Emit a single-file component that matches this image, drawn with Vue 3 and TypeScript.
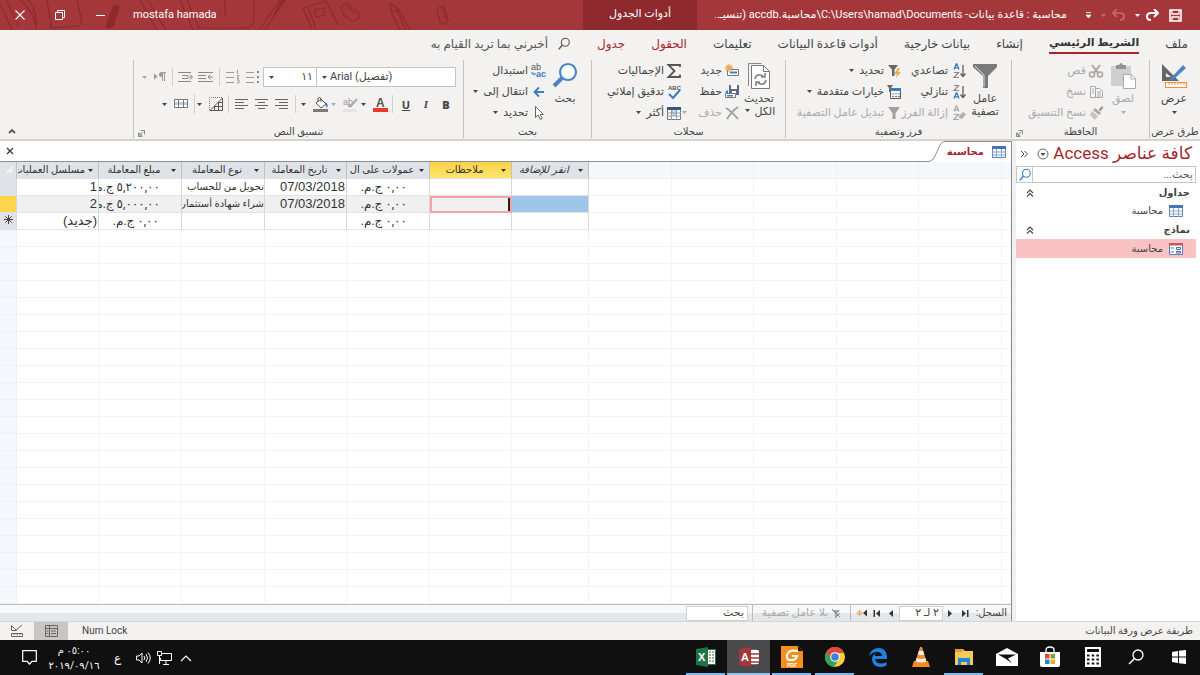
<script setup lang="ts">
import { ref } from 'vue'

interface Command {
  label: string
  icon: string
  caret?: boolean
  disabled?: boolean
  farCaret?: boolean
}
interface Tab {
  label: string
  kind?: 'active' | 'context'
}
interface Row {
  id: string
  amount: string
  type: string
  date: string
  fee: string
}

const tabs: Tab[] = [
  { label: 'ملف' },
  { label: 'الشريط الرئيسي', kind: 'active' },
  { label: 'إنشاء' },
  { label: 'بيانات خارجية' },
  { label: 'أدوات قاعدة البيانات' },
  { label: 'تعليمات' },
  { label: 'الحقول', kind: 'context' },
  { label: 'جدول', kind: 'context' },
]

const clipboard: Command[] = [
  { label: 'قص', icon: 'cut', disabled: true },
  { label: 'نسخ', icon: 'copy', disabled: true },
  { label: 'نسخ التنسيق', icon: 'brush', disabled: true },
]
const sorting: Command[] = [
  { label: 'تصاعدي', icon: 'sort-asc' },
  { label: 'تنازلي', icon: 'sort-desc' },
  { label: 'إزالة الفرز', icon: 'sort-clear', disabled: true },
]
const filtering: Command[] = [
  { label: 'تحديد', icon: 'filter-flash', caret: true },
  { label: 'خيارات متقدمة', icon: 'filter-form', caret: true },
  { label: 'تبديل عامل التصفية', icon: 'filter-small', disabled: true },
]
const records: Command[] = [
  { label: 'جديد', icon: 'rec-new' },
  { label: 'حفظ', icon: 'rec-save' },
  { label: 'حذف', icon: 'rec-delete', disabled: true, farCaret: true },
]
const recordTools: Command[] = [
  { label: 'الإجماليات', icon: 'sigma' },
  { label: 'تدقيق إملائي', icon: 'spelling' },
  { label: 'أكثر', icon: 'grid', caret: true },
]
const finding: Command[] = [
  { label: 'استبدال', icon: 'replace' },
  { label: 'انتقال إلى', icon: 'goto', caret: true },
  { label: 'تحديد', icon: 'pointer', caret: true },
]

const headers = ['مسلسل العمليات', 'مبلغ المعاملة', 'نوع المعاملة', 'تاريخ المعاملة', 'عمولات على ال', 'ملاحظات', 'انقر للإضافة']
const rows: Row[] = [
  { id: '1', amount: '٥,٢٠٠,٠٠ ج.م.', type: 'تحويل من للحساب', date: '07/03/2018', fee: '٠,٠٠ ج.م.' },
  { id: '2', amount: '٥,٠٠٠,٠٠ ج.م.', type: 'شراء شهادة أستثمار', date: '07/03/2018', fee: '٠,٠٠ ج.م.' },
  { id: '(جديد)', amount: '٠,٠٠ ج.م.', type: '', date: '', fee: '٠,٠٠ ج.م.' },
]
const current = ref(1)
const fontName = ref('Arial (تفصيل)')
const fontSize = ref('١١')
const position = ref('٢ لـ ٢')
const recordSearch = ref('بحث')

const apps = [
  { id: 'start', name: 'ابدأ' },
  { id: 'search', name: 'بحث' },
  { id: 'calc', name: 'الحاسبة' },
  { id: 'store', name: 'المتجر' },
  { id: 'mail', name: 'البريد' },
  { id: 'explorer', name: 'مستكشف الملفات', open: true },
  { id: 'vlc', name: 'VLC' },
  { id: 'edge', name: 'Edge' },
  { id: 'chrome', name: 'Chrome', open: true },
  { id: 'foxit', name: 'PDF', open: true },
  { id: 'access', name: 'Access', open: true, active: true },
  { id: 'excel', name: 'Excel', open: true },
]
</script>

<template>
  <svg class="defs" aria-hidden="true">
    <symbol id="caret" viewBox="0 0 5 3"><path d="M0 0h5L2.500 3z" fill="currentColor" /></symbol>
    <symbol id="cut" viewBox="0 0 16 16"><path d="M4 2l6 8M12 2L6 10" stroke="#a6a6a6" stroke-width="2" fill="none" /><g fill="none" stroke="#a6a6a6" stroke-width="1.500"><circle cx="4" cy="11.500" r="2.500" /><circle cx="12" cy="11.500" r="2.500" /></g></symbol>
    <symbol id="copy" viewBox="0 0 16 16"><path d="M2.500 2.500h5v11h-5zM7.500 4.500h4l3 3v6h-7z" fill="#f7f7f7" stroke="#a6a6a6" /><path d="M4 5h2M4 7h2M4 9h2M9 8h4M9 10h4M9 12h4" stroke="#a6a6a6" /></symbol>
    <symbol id="brush" viewBox="0 0 16 16"><path d="M14 1l1.500 1.500-3 4-2-2z" fill="#9b9b9b" /><path d="M7 3l6 5-2 2-6-5z" fill="#a6a6a6" /><path d="M4 6l6 5-3 4-5-5z" fill="#c4c4c4" /></symbol>
    <symbol id="sort-asc" viewBox="0 0 16 16"><path d="M4 6.500L6.200 1h.6L9 6.500M4.700 4.800h3.600" stroke="#3b7cc0" stroke-width="1.300" fill="none" /><path d="M4 9.500h4.500L4 14.500h5" stroke="#8b8b8b" stroke-width="1.200" fill="none" /><path d="M13 2v11M10.500 10.500L13 13.500l2.500-3" stroke="#555" stroke-width="1.200" fill="none" /></symbol>
    <symbol id="sort-desc" viewBox="0 0 16 16"><path d="M4 14.500L6.200 9h.6L9 14.500M4.700 12.800h3.600" stroke="#3b7cc0" stroke-width="1.300" fill="none" /><path d="M4 1.500h4.500L4 6.500h5" stroke="#8b8b8b" stroke-width="1.200" fill="none" /><path d="M13 2v11M10.500 10.500L13 13.500l2.500-3" stroke="#555" stroke-width="1.200" fill="none" /></symbol>
    <symbol id="sort-clear" viewBox="0 0 16 16"><path d="M4 6.500L6.200 1h.6L9 6.500M4.700 4.800h3.600M4 9.500h4.500L4 14.500h5" stroke="#a6a6a6" stroke-width="1.200" fill="none" /><path d="M9 11l4-4 3 2-4 5-3-1z" fill="#b0b0b0" /></symbol>
    <symbol id="filter-flash" viewBox="0 0 16 16"><path d="M2 2h10L8.500 6.500V13H6V6.500z" fill="#666" /><path d="M12 5l-4 6h3l-1 4 5-6h-3l2-4z" fill="#eba85b" /></symbol>
    <symbol id="filter-form" viewBox="0 0 16 16"><path d="M4.500 4.500h10v10h-10z" fill="#fff" stroke="#555" /><path d="M4 4h11v3H4z" fill="#3b7cc0" /><path d="M6 10h2M9 10h2M12 10h2M6 12.500h2M9 12.500h2M12 12.500h2" stroke="#777" /><path d="M1 1h6L5 4v4H3V4z" fill="#666" /></symbol>
    <symbol id="filter-small" viewBox="0 0 16 16"><path d="M2 2h12L9.500 8v6h-3V8z" fill="#a0a0a0" /></symbol>
    <symbol id="filter-off" viewBox="0 0 10 9"><path d="M1 1h8L6 5v4H4V5z" fill="#a6a6a6" /><path d="M1 0l8 8M5 8l4-4" stroke="#8e8e8e" /></symbol>
    <symbol id="rec-new" viewBox="0 0 16 16"><path d="M3.500 6.500h11v6h-11z" fill="#fff" stroke="#777" /><path d="M6 8.500h7v2H6z" fill="#3b7cc0" /><path d="M5 1v8M1 5h8M2.200 2.200l5.600 5.600M7.800 2.200L2.200 7.800" stroke="#eba85b" stroke-width="1.300" /></symbol>
    <symbol id="rec-save" viewBox="0 0 16 16"><path d="M5 1h10v10H5z" fill="#5c6a86" /><path d="M7 1h6v4H7zM8 7h4v4H8z" fill="#fff" /><path d="M1.500 9.500h10v4h-10z" fill="#fff" stroke="#777" /><path d="M3 11h6v1.500H3zM1 8l3-2v4z" fill="#3b7cc0" /></symbol>
    <symbol id="rec-delete" viewBox="0 0 16 16"><path d="M2 3q5 3 12 11M14 2Q8 6 3 14" stroke="#a0a0a0" stroke-width="1.800" fill="none" /></symbol>
    <symbol id="sigma" viewBox="0 0 16 16"><path d="M14 4V2H2.500L8.500 8l-6 6H14v-2.500" stroke="#555" stroke-width="1.800" fill="none" /></symbol>
    <symbol id="spelling" viewBox="0 0 16 16"><text x="2" y="5.500" font-size="6" font-weight="700" fill="#555">ABC</text><path d="M3 10l4 4 7-8" stroke="#3b7cc0" stroke-width="2" fill="none" /></symbol>
    <symbol id="grid" viewBox="0 0 16 16"><path d="M1.500 2.500h13v12h-13z" fill="#fff" stroke="#777" /><path d="M1 2h14v3H1z" fill="#36577f" /><path d="M6 5h4v6H6z" fill="#bcd5ee" /><path d="M1 8h14M1 11h14M5.500 5v10M10.500 5v10" stroke="#999" /></symbol>
    <symbol id="replace" viewBox="0 0 16 16"><text x="1" y="7" font-size="9" fill="#555">ab</text><text x="6" y="14" font-size="9" font-weight="700" fill="#3b7cc0">ac</text><path d="M2 9v2h3M4 9.500L5.500 11 4 12.500" stroke="#3b7cc0" fill="none" /></symbol>
    <symbol id="goto" viewBox="0 0 16 16"><path d="M14 8H5M9 3.500L4.500 8 9 12.500" stroke="#3b7cc0" stroke-width="1.800" fill="none" /></symbol>
    <symbol id="pointer" viewBox="0 0 16 16"><path d="M5.500 1.500v11l2.700-2.500 2 4.500 2-1-2-4h3.300z" fill="#fff" stroke="#666" /></symbol>
    <symbol id="magnifier" viewBox="0 0 16 16"><circle cx="9.500" cy="6" r="4.500" fill="none" stroke="currentColor" stroke-width="1.200" /><path d="M6.300 9.200L2 14" stroke="currentColor" stroke-width="1.500" /></symbol>
    <symbol id="launcher" viewBox="0 0 8 8"><path d="M7.500 5V.500H3M.500 3v4.500H5M6 2L2.500 5.500M2 3v3h3" stroke="#777" fill="none" /></symbol>
    <symbol id="table-small" viewBox="0 0 14 12"><path d="M.500.500h13v11H.500z" fill="#fff" stroke="#5c7fb0" /><path d="M0 0h14v3H0z" fill="#4573b8" /><path d="M0 6h14M0 9h14M4.500 3v9M9.500 3v9" stroke="#86a3cb" /></symbol>
    <symbol id="form-small" viewBox="0 0 14 12"><path d="M.500.500h13v11H.500z" fill="#fff" stroke="#5c7fb0" /><path d="M0 0h14v2.500H0z" fill="#c55a5e" /><path d="M1.500 5H5M1.500 9H5" stroke="#4573b8" /><path d="M7.500 4.500h4v2h-4zM7.500 8.500h4v1.500h-4z" fill="#dbe7f6" stroke="#4573b8" /></symbol>
    <symbol id="chevrons-up" viewBox="0 0 8 8"><path d="M1 4l3-3 3 3M1 7.500l3-3 3 3" fill="none" stroke="#444" stroke-width="1.100" /></symbol>
    <symbol id="align-right" viewBox="0 0 14 12"><path d="M0 1.500h13M4 4.500h9M0 7.500h13M4 10.500h9" stroke="#666" /></symbol>
    <symbol id="align-center" viewBox="0 0 14 12"><path d="M0 1.500h13M3 4.500h7M0 7.500h13M3 10.500h7" stroke="#666" /></symbol>
    <symbol id="align-left" viewBox="0 0 14 12"><path d="M0 1.500h13M0 4.500h9M0 7.500h13M0 10.500h9" stroke="#666" /></symbol>

    <symbol id="app-start" viewBox="0 0 22 22"><path d="M4 6l6-1v5.500H4zM11 4.800L18 4v6.500h-7zM4 11.500h6V17l-6-1zM11 11.500h7V18l-7-.800z" fill="#fff" /></symbol>
    <symbol id="app-search" viewBox="0 0 22 22"><circle cx="13" cy="9" r="5" fill="none" stroke="#fff" stroke-width="1.300" /><path d="M9.300 12.700L4 18" stroke="#fff" stroke-width="1.500" /></symbol>
    <symbol id="app-calc" viewBox="0 0 22 22"><path d="M3 1h16v20H3z" fill="#fff" /><path d="M5 3h12v3H5z" fill="#111" /><path d="M5 9.500h12M5 13.500h12M5 17.500h12" stroke="#111" stroke-width="2" stroke-dasharray="2.500 2.200" /></symbol>
    <symbol id="app-store" viewBox="0 0 22 22"><path d="M7 7V4q0-3 4-3t4 3v3" fill="none" stroke="#fff" stroke-width="1.300" /><path d="M1 6h20v13q0 2-2 2H3q-2 0-2-2z" fill="#fff" /><path d="M6 8h4.500v4.500H6z" fill="#e8452c" /><path d="M11.500 8H16v4.500h-4.500z" fill="#7aa82c" /><path d="M6 13.500h4.500V18H6z" fill="#1b83d8" /><path d="M11.500 13.500H16V18h-4.500z" fill="#f3a821" /></symbol>
    <symbol id="app-mail" viewBox="0 0 22 22"><path d="M0 8l11-6 11 6v12H0z" fill="#fff" /><path d="M2 8.500h18l-8 4 4 5-6-4.500z" fill="#111" /></symbol>
    <symbol id="app-explorer" viewBox="0 0 22 22"><path d="M2 3h8l2 2h8v14H2z" fill="#f7ca55" /><path d="M2 3h8v3H2z" fill="#f09a2b" /><path d="M5 12h12v7h-3v-3H8v3H5z" fill="#2385d7" /></symbol>
    <symbol id="app-vlc" viewBox="0 0 22 22"><path d="M4 15h14l2 6H2z" fill="#f38b1e" /><path d="M10 1h2l5 16q-6 3-12 0z" fill="#f38b1e" /><path d="M8.800 5h4.400l1.100 3.500q-3.300 1.500-6.600 0zM6.600 12q4.400 2 8.800 0l1 3.500q-5.400 2-10.800 0z" fill="#eee" /></symbol>
    <symbol id="app-edge" viewBox="0 0 22 22"><path d="M2 10Q4 2 12 2q7 0 8 8.500V13H8q1 4.500 6 4.500 3 0 5.500-1.500v3.500Q17 21 13 21q-8-1-8-8 0-4 4-6-1 1-1.500 3H15q0-4-5-4-5 0-8 4z" fill="#1d83df" /></symbol>
    <symbol id="app-chrome" viewBox="0 0 22 22"><circle cx="11" cy="11" r="10" fill="#f9cf3c" /><path d="M11 11L2.300 6A10 10 0 0 0 10 21l5-8z" fill="#34a35a" /><path d="M11 7h9.200A10 10 0 0 0 2.300 6L7 13z" fill="#df4a3c" /><circle cx="11" cy="11" r="4.800" fill="#fff" /><circle cx="11" cy="11" r="3.800" fill="#3d80e0" /></symbol>
    <symbol id="app-foxit" viewBox="0 0 22 22"><path d="M0 0h17l5 5v17H0z" fill="#f68e1e" /><path d="M17 0v5h5z" fill="#111" /><path d="M17 5q-9-2-11 4-1 6 5 5 4 0 5-4h-5" fill="none" stroke="#fff" stroke-width="2.200" /><text x="6" y="20.500" font-size="5" font-weight="700" fill="#fff">PDF</text></symbol>
    <symbol id="app-access" viewBox="0 0 22 22"><path d="M12 4q8-1 9 1v12q-1 2-9 1z" fill="#fff" /><path d="M13 8h8M13 12h8M13 16h8" stroke="#a4373a" stroke-width="1.300" /><path d="M1 3l12-2v20L1 19z" fill="#a4373a" /><text x="3" y="15" font-size="11" font-weight="700" fill="#fff">A</text></symbol>
    <symbol id="app-excel" viewBox="0 0 22 22"><path d="M12.500 3.500h8v15h-8z" fill="#fff" stroke="#1f7346" /><path d="M14 6h2M14 9h2M14 12h2M14 15h2M17 6h2M17 9h2M17 12h2M17 15h2" stroke="#555" /><path d="M1 3l12-2v20L1 19z" fill="#1f7346" /><text x="3" y="15" font-size="11" font-weight="700" fill="#fff">X</text></symbol>
  </svg>

  <div class="window" dir="rtl">
    <header class="titlebar">
      <svg class="doodles" viewBox="0 0 470 30" aria-hidden="true">
        <g fill="none" stroke="#8d2a2e" stroke-width="1.200">
          <path d="M0 4l12 26M6 0l13 27M20 0q15 12 16 30M28 0q10 14 8 24M47 0l5 28 26-2q5-2 3-8L77 0M52 28l-3-4M140 0l17 30M148 0l18 30M180 0l13 30M187 0l12 28M196 28h50q7-1 8-8V0M225 0v15" />
          <path d="M260 29l20-29M265 29l20-29M303 8l23-7 12 24M303 8l9 21M308 7l8 22M315 10l9-2 1 7-9 2zM341 8q1-6 7-4l10 8q3 9-6 9l-8-6zM346 6l9 7" />
          <path d="M390 3l8 6 12 21M390 3l2 11 8 16M392 12l6-3M396 9l10 21M438 8l6-2 4 14q-4 7-8 2l-3-12q4-6 6 0l3 9" />
        </g>
        <path d="M112 8q3-6 8-2l-6 20q-6 5-9 1zM281 0h5l-13 16z" fill="#8d2a2e" />
      </svg>
      <div class="quick">
        <button aria-label="حفظ"><svg width="13" height="13" viewBox="0 0 13 13"><path d="M1 1h11v11H1z" fill="none" stroke="#fff" stroke-width="1.600" /><path d="M3 1v4h7V1M3 12V8h7v4" fill="none" stroke="#fff" stroke-width="1.300" /></svg></button>
        <button class="redo" aria-label="إعادة"><svg width="13" height="12" viewBox="0 0 13 12"><path d="M12 4H5Q1 4 1 7.500 1 11 5 11M8 0l4 4-4 4" fill="none" stroke="#fff" stroke-width="2" /></svg><svg class="caret"><use href="#caret" /></svg></button>
        <button class="undo" aria-label="تراجع" disabled><svg width="13" height="12" viewBox="0 0 13 12"><path d="M1 4h7q4 0 4 3.500Q12 11 8 11M5 0L1 4l4 4" fill="none" stroke="#c96c6f" stroke-width="1.600" /></svg><svg class="caret"><use href="#caret" /></svg></button>
        <button aria-label="تخصيص"><svg width="5" height="7" viewBox="0 0 5 7"><path d="M0 .500h5M0 3h5L2.500 6z" stroke="#fff" fill="#fff" stroke-width=".800" /></svg></button>
      </div>
      <h1>محاسبة : قاعدة بيانات- C:\Users\hamad\Documents\محاسبة.accdb (تنسيـ...</h1>
      <div class="context-title">أدوات الجدول</div>
      <span class="user">mostafa hamada</span>
      <div class="winbtns">
        <button aria-label="تصغير"><svg width="11" height="11" viewBox="0 0 11 11"><path d="M1 5.500h9" stroke="#fff" /></svg></button>
        <button aria-label="استعادة"><svg width="10" height="10" viewBox="0 0 10 10"><path d="M.500 2.500h7v7h-7zM2.500 2.500v-2h7v7h-2" fill="none" stroke="#fff" /></svg></button>
        <button aria-label="إغلاق"><svg width="10" height="10" viewBox="0 0 10 10"><path d="M.500.500l9 9M9.500.500l-9 9" stroke="#fff" stroke-width="1.100" /></svg></button>
      </div>
    </header>

    <nav class="tabs">
      <button v-for="t in tabs" :key="t.label" class="tab" :class="t.kind">{{ t.label }}</button>
      <button class="tab tell"><svg width="14" height="14"><use href="#magnifier" /></svg>أخبرني بما تريد القيام به</button>
    </nav>

    <section class="ribbon">
      <div class="group views">
        <div class="tools">
          <button class="big">
            <svg width="28" height="28" viewBox="0 0 28 28"><path d="M2 2v17h17zM6 11v4h5z" fill="#666" fill-rule="evenodd" /><path d="M11 16L23 3l3 3-13 12-4 1z" fill="#4a86c5" /><path d="M5.500 20.500h21v5h-21z" fill="#fff" stroke="#eb9140" stroke-width="1.200" /><path d="M9 21v2M12 21v2M15 21v2M18 21v2M21 21v2M24 21v2" stroke="#eb9140" /></svg>
            <span>عرض</span><svg class="caret"><use href="#caret" /></svg>
          </button>
        </div>
        <h2>طرق عرض</h2>
      </div>

      <div class="group clip">
        <div class="tools">
          <button class="big" disabled>
            <svg width="28" height="28" viewBox="0 0 28 28"><path d="M2 4h20v20H2z" fill="#cfcfcf" /><path d="M7 3h3q2-4 4 0h3v4H7z" fill="#929292" /><path d="M14.500 12.500h8l4 4v10h-12z" fill="#fff" stroke="#aaa" /><path d="M22 12v5h5" fill="none" stroke="#aaa" /></svg>
            <span>لصق</span><svg class="caret"><use href="#caret" /></svg>
          </button>
          <div class="col">
            <button v-for="c in clipboard" :key="c.label" class="cmd" :disabled="c.disabled"><svg class="ic"><use :href="'#' + c.icon" /></svg>{{ c.label }}</button>
          </div>
        </div>
        <h2>الحافظة</h2>
        <button class="launch" aria-label="خيارات الحافظة"><svg width="7" height="7"><use href="#launcher" /></svg></button>
      </div>

      <div class="group sort">
        <div class="tools">
          <button class="big">
            <svg width="28" height="28" viewBox="0 0 28 28"><path d="M2 2h24v3l-9 9v12h-5V14L2 5z" fill="#7a7a7a" /><path d="M4 4l9 9v12" fill="none" stroke="#ddd" /></svg>
            <span>عامل<br>تصفية</span>
          </button>
          <div class="col asc">
            <button v-for="c in sorting" :key="c.label" class="cmd" :disabled="c.disabled"><svg class="ic"><use :href="'#' + c.icon" /></svg>{{ c.label }}</button>
          </div>
          <div class="col">
            <button v-for="c in filtering" :key="c.label" class="cmd" :disabled="c.disabled"><svg class="ic"><use :href="'#' + c.icon" /></svg>{{ c.label }}<svg v-if="c.caret" class="caret"><use href="#caret" /></svg></button>
          </div>
        </div>
        <h2>فرز وتصفية</h2>
      </div>

      <div class="group recs">
        <div class="tools">
          <button class="big">
            <svg width="28" height="28" viewBox="0 0 28 28"><path d="M3.500 24V1.500h13" fill="none" stroke="#888" /><path d="M6.500 3.500h12l6 6v17h-18z" fill="#fff" stroke="#777" /><path d="M18.500 3.500v6h6" fill="none" stroke="#777" /><path d="M10 17q1-5 6-4l3 2M20 11v4h-4M21 18q-1 5-6 4l-3-2M11 24v-4h4" fill="none" stroke="#888" stroke-width="1.700" /></svg>
            <span>تحديث<br>الكل <svg class="caret"><use href="#caret" /></svg></span>
          </button>
          <div class="col rec">
            <button v-for="c in records" :key="c.label" class="cmd" :disabled="c.disabled"><svg class="ic"><use :href="'#' + c.icon" /></svg>{{ c.label }}<svg v-if="c.farCaret" class="caret far"><use href="#caret" /></svg></button>
          </div>
          <div class="col">
            <button v-for="c in recordTools" :key="c.label" class="cmd"><svg class="ic"><use :href="'#' + c.icon" /></svg>{{ c.label }}<svg v-if="c.caret" class="caret"><use href="#caret" /></svg></button>
          </div>
        </div>
        <h2>سجلات</h2>
      </div>

      <div class="group find">
        <div class="tools">
          <button class="big">
            <svg width="28" height="28" viewBox="0 0 28 28"><circle cx="17" cy="10" r="8" fill="#fff" stroke="#4a86c5" stroke-width="2.200" /><path d="M11 16l-8 8" stroke="#4a86c5" stroke-width="4" /></svg>
            <span>بحث</span>
          </button>
          <div class="col">
            <button v-for="c in finding" :key="c.label" class="cmd"><svg class="ic"><use :href="'#' + c.icon" /></svg>{{ c.label }}<svg v-if="c.caret" class="caret"><use href="#caret" /></svg></button>
          </div>
        </div>
        <h2>بحث</h2>
      </div>

      <div class="group text">
        <div class="format">
          <div class="line">
            <span class="pick name"><select v-model="fontName" aria-label="الخط" dir="ltr"><option>Arial (تفصيل)</option></select><svg class="caret"><use href="#caret" /></svg></span>
            <span class="pick size"><select v-model="fontSize" aria-label="حجم الخط"><option>١١</option></select><svg class="caret"><use href="#caret" /></svg></span>
            <button class="tool" disabled aria-label="تعداد نقطي"><svg width="14" height="14" viewBox="0 0 14 14"><path d="M0 2.500h8M0 7.500h8M0 12.500h8" stroke="#999" /><path d="M11 1h2v2h-2zM11 6h2v2h-2zM11 11h2v2h-2z" fill="#888" /></svg></button>
            <button class="tool" disabled aria-label="تعداد رقمي"><svg width="14" height="14" viewBox="0 0 14 14"><path d="M0 2.500h8M0 7.500h8M0 12.500h8" stroke="#999" /><path d="M11.500 0v4M11 5.500h2l-2 3h2M11 10h2v3h-2" stroke="#999" fill="none" /></svg></button>
            <i class="sep" />
            <button class="tool" disabled aria-label="إنقاص"><svg width="16" height="12" viewBox="0 0 16 12"><path d="M0 1.500h15M0 4.500h8M0 7.500h8M0 10.500h15M15 6h-5M12.500 3.500L10 6l2.500 2.500" stroke="#888" fill="none" /></svg></button>
            <button class="tool" disabled aria-label="زيادة"><svg width="16" height="12" viewBox="0 0 16 12"><path d="M0 1.500h13M4 4.500h6M4 7.500h6M0 10.500h13M9 6h5M12 3.500L14.500 6 12 8.500" stroke="#888" fill="none" /></svg></button>
            <i class="sep" />
            <button class="tool wide" disabled aria-label="اتجاه النص"><svg width="12" height="10" viewBox="0 0 12 10"><path d="M0 1.500L3.500 4.500 0 7.500zM8 0h4v1h-1v8h-1V1H9v8H8V5Q5 5 5 2.500T8 0z" fill="#999" /></svg><svg class="caret"><use href="#caret" /></svg></button>
          </div>
          <div class="line">
            <button class="tool letter" aria-label="غامق"><b>B</b></button>
            <button class="tool letter" aria-label="مائل"><em>I</em></button>
            <button class="tool letter" aria-label="تسطير"><u>U</u></button>
            <i class="sep" />
            <button class="tool wide" aria-label="لون الخط"><svg width="15" height="15" viewBox="0 0 15 15"><text x="3" y="10" font-size="12" font-weight="700" fill="#555">A</text><path d="M0 11h15v4H0z" fill="#e8392b" /></svg><svg class="caret"><use href="#caret" /></svg></button>
            <button class="tool wide" disabled aria-label="تمييز"><svg width="15" height="15" viewBox="0 0 15 15"><text x="0" y="8" font-size="9" fill="#999">ab</text><path d="M14 2l-7 8M5 8l2 2" stroke="#aaa" stroke-width="2" /><path d="M0 12h14v3H0z" fill="#e3e3e3" /></svg><svg class="caret"><use href="#caret" /></svg></button>
            <button class="tool wide" aria-label="لون الخلفية"><svg width="15" height="15" viewBox="0 0 15 15"><path d="M3 6l5-4 5 5-5 4zM5 5V1q2-2 3 1v3" fill="#fff" stroke="#555" /><path d="M12 5q4 2 2 6l-2-4z" fill="#3b7cc0" /><path d="M0 12h15v3H0z" fill="#7a7a7a" /></svg><svg class="caret"><use href="#caret" /></svg></button>
            <i class="sep" />
            <button class="tool" aria-label="يمين"><svg width="14" height="12"><use href="#align-right" /></svg></button>
            <button class="tool" aria-label="وسط"><svg width="14" height="12"><use href="#align-center" /></svg></button>
            <button class="tool" aria-label="يسار"><svg width="14" height="12"><use href="#align-left" /></svg></button>
            <i class="sep" />
            <button class="tool wide" aria-label="خطوط الشبكة"><svg width="14" height="14" viewBox="0 0 14 14"><path d="M.500 13V.500H13" fill="none" stroke="#777" stroke-dasharray="1 1" /><path d="M1 13.500L13.500 1v12.500zM5 9.500h8M9 5.500h4M5.500 9v4M9.500 5v8" fill="none" stroke="#555" /></svg><svg class="caret"><use href="#caret" /></svg></button>
            <button class="tool wide banding" aria-label="لون الصف البديل"><svg width="14" height="12" viewBox="0 0 14 12"><path d="M.500 1.500h13v8H.500z" fill="#fff" stroke="#777" /><path d="M1 4h12v3H1z" fill="#b8cde6" /><path d="M0 1.500h14M4.500 1v8M9.500 1v8" stroke="#777" /></svg><svg class="caret"><use href="#caret" /></svg></button>
          </div>
        </div>
        <h2>تنسيق النص</h2>
        <button class="launch" aria-label="خيارات النص"><svg width="7" height="7"><use href="#launcher" /></svg></button>
      </div>
      <div class="rest"><button aria-label="طي الشريط"><svg width="8" height="6" viewBox="0 0 8 6"><path d="M1 5l3-3 3 3" fill="none" stroke="#555" stroke-width="1.800" /></svg></button></div>
    </section>

    <main class="work">
      <aside class="pane">
        <div class="pane-head">
          <h2>كافة عناصر Access</h2>
          <button aria-label="القائمة"><svg width="12" height="12" viewBox="0 0 12 12"><circle cx="6" cy="6" r="5" fill="none" stroke="#666" /><path d="M3.500 5h5L6 8z" fill="#444" /></svg></button>
          <button class="shut" aria-label="إخفاء"><svg width="8" height="8" viewBox="0 0 8 8"><path d="M1 1l3 3-3 3M4.500 1l3 3-3 3" fill="none" stroke="#444" /></svg></button>
        </div>
        <div class="find-box">
          <input type="text" aria-label="بحث في الكائنات" placeholder="بحث...">
          <button aria-label="بحث"><svg width="14" height="14"><use href="#magnifier" /></svg></button>
        </div>
        <button class="cat">جداول<svg width="8" height="8"><use href="#chevrons-up" /></svg></button>
        <a class="obj" href="#"><svg width="14" height="12"><use href="#table-small" /></svg>محاسبة</a>
        <button class="cat">نماذج<svg width="8" height="8"><use href="#chevrons-up" /></svg></button>
        <a class="obj chosen" href="#"><svg width="14" height="12"><use href="#form-small" /></svg>محاسبة</a>
      </aside>

      <section class="doc">
        <div class="doc-tabs">
          <button class="doc-tab"><svg width="14" height="12"><use href="#table-small" /></svg>محاسبة</button>
          <svg width="16" height="21" viewBox="0 0 16 21"><path d="M0 20.500Q4 20 6 15L11 4q2-3.500 5-3.500" fill="none" stroke="#8e8e8e" /></svg>
          <div class="doc-line"><button aria-label="إغلاق الجدول"><svg width="8" height="8" viewBox="0 0 8 8"><path d="M1 1l6 6M7 1L1 7" stroke="#333" stroke-width="1.200" /></svg></button></div>
        </div>

        <table class="sheet" dir="ltr">
          <colgroup>
            <col class="c-mark"><col class="c-a"><col class="c-b"><col class="c-b"><col class="c-a"><col class="c-b"><col class="c-a"><col class="c-add"><col class="c-b"><col class="c-a"><col class="c-b"><col class="c-a"><col class="c-b"><col>
          </colgroup>
          <thead>
            <tr>
              <th class="corner"><svg width="9" height="9" viewBox="0 0 9 9"><path d="M0 9L9 0v9z" fill="#edf2f7" stroke="#cbd3dc" stroke-width=".500" /></svg></th>
              <th v-for="(h, i) in headers" :key="h" :class="{ hot: i === 5, add: i === 6 }"><div dir="rtl"><svg class="caret"><use href="#caret" /></svg><span>{{ h }}</span></div></th>
              <th v-for="n in 6" :key="n" class="void" />
            </tr>
          </thead>
          <tbody>
            <tr v-for="(r, i) in rows" :key="r.id" :class="{ current: i === current }">
              <th class="mark"><svg v-if="i === 2" width="9" height="9" viewBox="0 0 9 9"><path d="M4.500 0v9M0 4.500h9M1.300 1.300l6.400 6.400M7.700 1.300L1.300 7.700" stroke="#444" /></svg></th>
              <td dir="rtl" class="id">{{ r.id }}</td>
              <td dir="rtl" class="money">{{ r.amount }}</td>
              <td dir="rtl" class="kind">{{ r.type }}</td>
              <td dir="ltr" class="date">{{ r.date }}</td>
              <td dir="rtl" class="money">{{ r.fee }}</td>
              <td :class="{ editing: i === current }"><input v-if="i === current" type="text" aria-label="ملاحظات"></td>
              <td :class="{ next: i === current }" />
              <td v-for="n in 6" :key="n" class="void" />
            </tr>
            <tr v-for="n in 22" :key="'e' + n" class="empty"><th /><td v-for="k in 13" :key="k" /></tr>
          </tbody>
        </table>

        <div class="recordbar">
          <label for="pos">السجل:</label>
          <button aria-label="الأخير"><svg width="7" height="7" viewBox="0 0 7 7"><path d="M0 0l4 3.500L0 7zM5 0h1.500v7H5z" fill="#333" /></svg></button>
          <button aria-label="التالي"><svg width="7" height="7" viewBox="0 0 7 7"><path d="M1 0l4 3.500L1 7z" fill="#333" /></svg></button>
          <input id="pos" v-model="position" type="text" class="pos">
          <button aria-label="السابق"><svg width="7" height="7" viewBox="0 0 7 7"><path d="M5 0v7L1 3.500z" fill="#333" /></svg></button>
          <button aria-label="الأول"><svg width="7" height="7" viewBox="0 0 7 7"><path d="M7 0v7L3 3.500zM.500 0H2v7H.500z" fill="#333" /></svg></button>
          <button aria-label="سجل جديد"><svg width="12" height="8" viewBox="0 0 12 8"><path d="M11 .500v7L7 4z" fill="#333" /><path d="M3.500 1v6M.500 4h6M1.500 2l4 4M5.500 2l-4 4" stroke="#eba85b" /></svg></button>
          <button class="nofilter" disabled><svg width="10" height="9"><use href="#filter-off" /></svg>بلا عامل تصفية</button>
          <input v-model="recordSearch" type="text" class="lookup" aria-label="بحث في السجلات">
          <div class="scroll" />
        </div>
      </section>
    </main>

    <footer class="status">
      <span>طريقة عرض ورقة البيانات</span>
      <span class="num">Num Lock</span>
      <button class="on" aria-label="ورقة البيانات"><svg width="13" height="12" viewBox="0 0 13 12"><path d="M.500.500h12v11H.500zM0 3.500h13M4.500 0v12M6 6h5M6 8.500h5M1.500 6h2M1.500 8.500h2" fill="none" stroke="#666" /></svg></button>
      <button aria-label="التصميم"><svg width="14" height="12" viewBox="0 0 14 12"><path d="M1.500.500v5h5zM5 6l7-6M1.500 8.500h11v3h-11zM4 9v1M7 9v1M10 9v1" fill="none" stroke="#666" /></svg></button>
    </footer>

    <div class="taskbar">
      <button v-for="a in apps" :key="a.id" class="app" :class="{ open: a.open, active: a.active }" :aria-label="a.name"><svg width="22" height="22"><use :href="'#app-' + a.id" /></svg></button>
      <div class="tray">
        <button aria-label="رموز مخفية"><svg width="12" height="8" viewBox="0 0 12 8"><path d="M1 7l5-5 5 5" fill="none" stroke="#fff" stroke-width="1.200" /></svg></button>
        <button aria-label="الشبكة"><svg width="15" height="14" viewBox="0 0 15 14"><path d="M4 2.500h10.500v7H3.500V7M9 10v3M6 13.500h6M.500.500h4v4h-4zM2.500 5v8" fill="none" stroke="#fff" /></svg></button>
        <button aria-label="الصوت"><svg width="15" height="14" viewBox="0 0 15 14"><path d="M.500 5h2.500l3-3v10l-3-3H.500zM8 5q1.500 2 0 4M10 3q3 4 0 8M12 1.500q4.500 5.500 0 11" fill="none" stroke="#fff" /></svg></button>
        <button class="lang">ع</button>
        <div class="clock"><span>٠٥:٠٠ م</span><span>٢٠١٩/٠٩/١٦</span></div>
        <button class="notes" aria-label="الإشعارات"><svg width="15" height="15" viewBox="0 0 15 15"><path d="M.700.700h13.600v10.600H10L7.500 14 5 11.300H.700z" fill="none" stroke="#fff" stroke-width="1.200" /></svg></button>
      </div>
    </div>
  </div>
</template>

<style>
html, body { margin: 0; background: #fff; }
</style>

<style scoped>
* { box-sizing: border-box; }
.defs { position: absolute; width: 0; height: 0; overflow: hidden; }
svg text { direction: ltr; font-family: "Liberation Sans", sans-serif; }
.window {
  display: flex; flex-direction: column; min-height: 100vh;
  font-family: Roboto, "DejaVu Sans", sans-serif;
  font-size: 11px; color: #444; line-height: 16px; overflow: hidden;
}
button, input, select { font: inherit; color: inherit; border: 0; background: none; padding: 0; margin: 0; border-radius: 0; outline: 0; }
button { display: flex; align-items: center; white-space: nowrap; }
button:disabled { color: #aaa; }
svg { flex: none; }
h1, h2 { margin: 0; font-weight: 400; font-size: 11px; white-space: nowrap; }
.caret { width: 5px; height: 3px; }

.titlebar { position: relative; display: flex; align-items: center; height: 30px; background: #a4373a; color: #fff; padding-right: 18px; }
.doodles { position: absolute; left: 0; top: 0; width: 470px; height: 30px; }
.quick { display: flex; flex: none; align-items: center; gap: 10px; width: 97px; }
.quick button { gap: 6px; }
.quick .undo { color: #c96c6f; }
.titlebar h1 { flex: 1; padding-right: 18px; overflow: hidden; line-height: 20px; }
.context-title { flex: none; width: 114px; height: 30px; margin-right: 18px; background: #8e2a2e; line-height: 28px; text-align: center; }
.user { position: relative; flex: none; width: 463px; text-align: left; padding-left: 13px; direction: ltr; }
.winbtns { position: relative; display: flex; flex: none; }
.winbtns button { width: 40px; height: 30px; justify-content: center; }

.tabs { display: flex; align-items: flex-start; gap: 26px; height: 27px; padding: 4px 12px 0 0; background: #f3f2f1; }
.tab { height: 20px; font-size: 12px; }
.active { font-size: 11px; font-weight: 700; color: #333; border-bottom: 2px solid #a4262c; }
.context { color: #a4262c; }
.tell { gap: 9px; color: #555; }

.ribbon { display: flex; height: 84px; background: #f3f2f1; border-bottom: 2px solid #d4d2d0; }
.group { position: relative; display: flex; flex-direction: column; justify-content: space-between; border-left: 1px solid #c4c2c0; margin: 3px 0 1px; flex: none; }
.group h2 { text-align: center; font-size: 10px; line-height: 12px; }
.views { width: 51px; }
.clip { width: 138px; }
.sort { width: 226px; }
.recs { width: 194px; }
.find { width: 128px; }
.text { width: 330px; }
.rest { flex: 1; display: flex; align-items: flex-end; justify-content: flex-end; padding: 0 0 5px 8px; }
.tools { display: flex; padding-right: 7px; }
.big { flex-direction: column; width: 38px; padding-top: 2px; line-height: 13px; }
.big span { margin-top: 2px; }
.big > .caret { margin-top: 6px; }
.big span .caret { margin: 3px 2px; }
.col { display: flex; flex-direction: column; }
.cmd { height: 21px; gap: 2px; }
.cmd .caret { margin-right: 3px; }
.cmd .far { margin-right: auto; }
.ic { width: 16px; height: 16px; }
.asc { width: 64px; }
.rec { width: 58px; }
.launch { position: absolute; left: 4px; bottom: 1px; }

.format { padding: 7px 7px 0 0; display: flex; flex-direction: column; gap: 7px; }
.line { display: flex; align-items: center; height: 20px; }
.pick { position: relative; height: 20px; border: 1px solid #c6c4c2; background: #fff; }
.pick select { appearance: none; width: 100%; height: 100%; padding: 0 13px; }
.pick .caret { position: absolute; left: 5px; top: 8px; }
.pick.name { width: 140px; }
.pick.size { width: 54px; margin-right: -1px; }
.pick.size select { padding: 0 3px; text-align: right; }
.tool { width: 20px; height: 20px; justify-content: center; flex: none; }
.tool.wide { width: 30px; gap: 7px; }
.tool.banding { border-right: 1px solid #d2d0ce; width: 40px; }
.letter { font: 700 11px "Noto Sans", sans-serif; }
.letter em { font-family: "Liberation Serif", serif; }
.sep { width: 1px; height: 18px; margin: 0 3px; background: #d2d0ce; }

.work { flex: 1; display: flex; }
.pane { width: 188px; padding: 0 4px; background: linear-gradient(to left, #fff 184px, #f0f0f0 184px); }
.pane-head { display: flex; align-items: center; height: 25px; padding: 0 4px; gap: 4px; }
.pane-head h2 { flex: none; font-size: 17px; color: #a4262c; line-height: 25px; }
.shut { margin-right: auto; }
.find-box { display: flex; height: 17px; border: 1px solid #c6c6c6; }
.find-box input { flex: 1; min-width: 0; padding: 0 2px; }
.find-box input::placeholder { color: #555; opacity: 1; }
.find-box button { width: 16px; border-right: 1px solid #c6c6c6; color: #3b7cc0; justify-content: center; }
.cat { width: 100%; height: 18px; justify-content: space-between; padding: 0 6px 0 10px; margin-top: 1px; font-weight: 700; font-size: 10px; }
.obj { display: flex; align-items: center; height: 18px; gap: 6px; padding-right: 13px; font-size: 10px; color: inherit; text-decoration: none; }
.chosen { height: 19px; background: #fbc2c4; }

.doc { flex: 1; min-width: 0; display: flex; flex-direction: column; border-right: 1px solid #8e8e8e; }
.doc-tabs { display: flex; height: 21px; background: #fff; }
.doc-tab { border-top: 1px solid #8e8e8e; color: #a4262c; font-weight: 700; font-size: 10px; gap: 8px; padding: 0 5px 0 2px; }
.doc-line { flex: 1; display: flex; align-items: center; justify-content: flex-end; padding-left: 6px; border-bottom: 1px solid #8e8e8e; }

.sheet { width: 100%; border-collapse: separate; border-spacing: 0; table-layout: fixed; color: #333; }
.c-mark { width: 17px; }
.c-a { width: 82px; }
.c-b { width: 83px; }
.c-add { width: 77px; }
.sheet th, .sheet td { height: 17px; padding: 0; overflow: hidden; white-space: nowrap; font-weight: 400; line-height: 16px; border-right: 1px solid #d6d6d6; border-bottom: 1px solid #e2e2e2; }
.sheet thead th { background: #dfe3e8; border-right-color: #bcc2c9; border-bottom-color: #dfe3e8; }
.sheet thead div { display: flex; align-items: center; gap: 3px; padding: 0 5px 0 1px; }
.sheet thead span { overflow: hidden; flex: 1; text-align: center; font-size: 10px; }
.sheet thead .hot { background: linear-gradient(#fbd149, #ffe56c); }
.sheet thead .add { font-style: italic; }
.sheet .mark { background: #dfe3e8; }
.sheet .current .mark { background: #ffd54e; }
.current td { background: #f0f0f0; }
.sheet .id, .sheet .date { font-family: "Liberation Sans", "DejaVu Sans", sans-serif; font-size: 13px; text-align: right; padding-right: 1px; }
.sheet .money { padding-right: 22px; font-size: 12px; }
.sheet .kind { font-size: 10px; }
.sheet td.editing { border: 2px solid #f7a3a5; }
.editing input { display: block; width: 100%; height: 13px; border-right: 2px solid #222; }
.sheet .next { background: #9fc5e8; }
.sheet thead .void { background: #f6f7fd; border-color: #eef0f3; }
.sheet td.void, .sheet .empty td { background: #fff; border-color: #f3f3f5; }
.sheet .empty th { background: #f6f7fd; border-color: #f0f0f4; }

.recordbar { display: flex; align-items: center; height: 17px; margin-top: auto; border-top: 1px solid #b8bcc2; background: linear-gradient(#f6f7f8 50%, #e4e7ea 50%); padding-right: 4px; }
.recordbar label { width: 34px; font-size: 10px; }
.recordbar button { width: 15px; justify-content: center; }
.recordbar input { height: 15px; background: #fff; border: 1px solid #d0d0d0; padding: 0 3px; }
.recordbar .pos { width: 44px; }
.recordbar .nofilter { width: 99px; height: 16px; gap: 3px; border: 0 solid #b8bcc2; border-width: 0 1px; margin-right: 3px; }
.recordbar .lookup { width: 62px; margin-right: 4px; }
.scroll { flex: 1; }

.status { display: flex; align-items: center; height: 19px; background: #f3f2f1; border-top: 1px solid #d8d6d4; padding-right: 7px; font-size: 10px; }
.num { margin-right: auto; padding-right: 14px; padding-left: 14px; direction: ltr; }
.status button { width: 34px; height: 18px; justify-content: center; }
.status .on { background: #c8c6c4; }

.taskbar { display: flex; height: 35px; background: #101010; color: #fff; }
.app { width: 43px; justify-content: center; border-bottom: 2px solid transparent; }
.open { border-image: linear-gradient(to right, transparent 4px, #76b9ed 4px, #76b9ed 39px, transparent 39px) 2; }
.app.active { background: #4a4a4d; border-image: none; border-bottom: 2px solid #8fc3ef; }
.tray { display: flex; align-items: center; margin-right: auto; padding-left: 12px; }
.tray button { width: 21px; justify-content: center; }
.tray .lang { width: 31px; font-size: 12px; }
.clock { display: flex; flex-direction: column; align-items: center; width: 56px; line-height: 15px; font-size: 10px; }
.tray .notes { width: 34px; }
</style>
